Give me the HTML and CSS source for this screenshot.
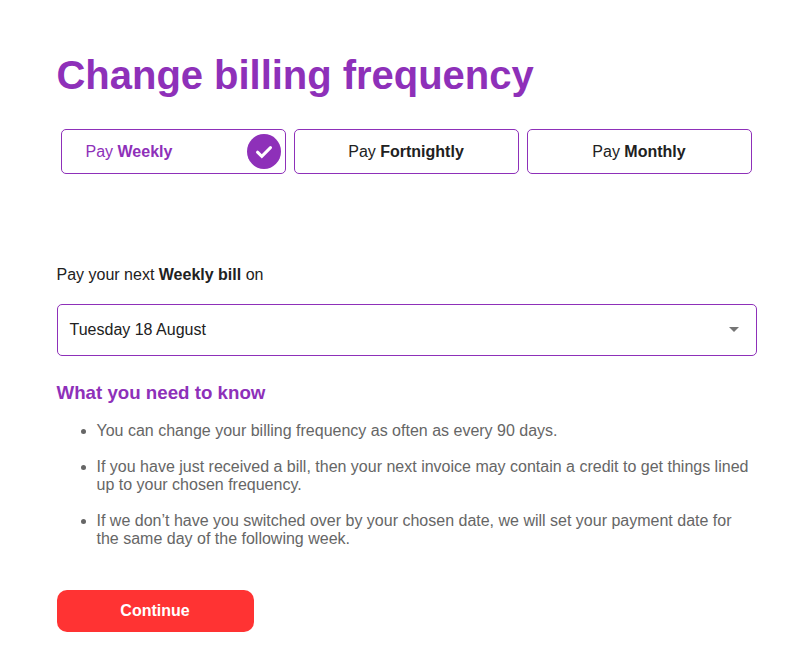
FILE: index.html
```html
<!DOCTYPE html>
<html lang="en">
<head>
  <meta charset="UTF-8">
  <meta name="viewport" content="width=device-width, initial-scale=1.0">
  <title>Change billing frequency</title>
  <link rel="stylesheet" href="styles.css">
</head>
<body>
  <div class="container">
    <h1>Change billing frequency</h1>
    <div class="options">
      <button class="option selected">
        <span>Pay <b>Weekly</b></span>
        <svg class="check" viewBox="0 0 34 35" width="34" height="35">
          <ellipse cx="17" cy="17.5" rx="17" ry="17.5" fill="#8e30b9"/>
          <path d="M10.5 18.2l4.3 4.1L23.5 13.6" fill="none" stroke="#fff" stroke-width="3" stroke-linecap="round"/>
        </svg>
      </button>
      <button class="option"><span>Pay <b>Fortnightly</b></span></button>
      <button class="option"><span>Pay <b>Monthly</b></span></button>
    </div>

    <p class="next-bill">Pay your next <b>Weekly bill</b> on</p>
    <div class="select">
      <span>Tuesday 18 August</span>
      <span class="arrow"></span>
    </div>

    <h2>What you need to know</h2>
    <ul>
      <li>You can change your billing frequency as often as every 90 days.</li>
      <li>If you have just received a bill, then your next invoice may contain a credit to get things lined up to your chosen frequency.</li>
      <li>If we don’t have you switched over by your chosen date, we will set your payment date for the same day of the following week.</li>
    </ul>

    <button class="continue">Continue</button>
  </div>
</body>
</html>
```

FILE: styles.css
```css
body {
  margin: 0;
  background-color: #fff;
  font-family: "Liberation Sans", Arial, sans-serif;
  font-size: 16px;
  line-height: 18px;
  color: #212121;
}

.container {
  width: 700px;
  padding: 51px 0 0 56.5px;
}

h1 {
  margin: 0;
  font-size: 40px;
  line-height: 48px;
  letter-spacing: -0.03px;
  color: #8e30b9;
}

button {
  font-family: inherit;
  font-size: 16px;
  cursor: pointer;
}

.options {
  display: grid;
  grid-template-columns: repeat(3, 1fr);
  gap: 8px;
  margin: 30px 5px 0 4px;
}

.option {
  display: flex;
  justify-content: center;
  align-items: center;
  box-sizing: border-box;
  height: 45px;
  padding: 0;
  border: 1px solid #8e30b9;
  border-radius: 5px;
  background-color: #fff;
  color: #212121;
}

.option.selected {
  justify-content: space-between;
  padding: 0 4px 0 24px;
  color: #8e30b9;
}

.next-bill {
  margin: 92px 0 0;
}

.select {
  display: flex;
  justify-content: space-between;
  align-items: center;
  box-sizing: border-box;
  height: 52px;
  margin-top: 20px;
  padding: 0 17px 0 12px;
  border: 1px solid #8e30b9;
  border-radius: 5px;
}

.arrow {
  margin-bottom: 1px;
  border-left: 5px solid transparent;
  border-right: 5px solid transparent;
  border-top: 5px solid #757575;
}

h2 {
  margin: 26px 0 0;
  font-size: 18.72px;
  line-height: 22px;
  color: #8e30b9;
}

ul {
  margin: 18px 0 0;
  padding-left: 40px;
  color: #666;
}

li {
  margin-bottom: 18px;
}

.continue {
  display: block;
  width: 197px;
  height: 42px;
  margin-top: 42px;
  padding: 0;
  border: none;
  border-radius: 10px;
  background-color: #ff3333;
  color: #fff;
  font-weight: bold;
}
```
